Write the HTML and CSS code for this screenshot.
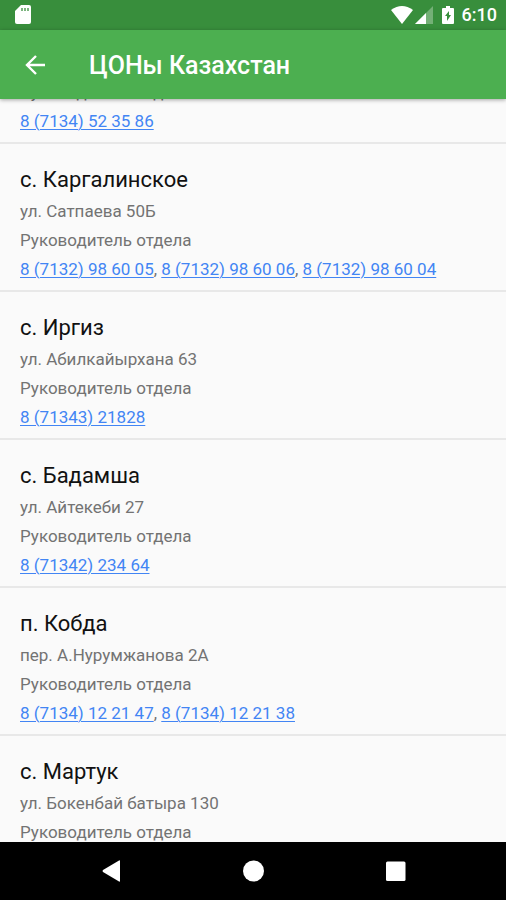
FILE: index.html
```html
<!DOCTYPE html>
<html lang="ru">
<head>
<meta charset="utf-8">
<meta name="viewport" content="width=device-width, initial-scale=1">
<title>ЦОНы Казахстан</title>
<link rel="stylesheet" href="styles.css">
</head>
<body>
<div class="status">
  <svg class="sd-icon" viewBox="0 0 16 20" aria-hidden="true"><path fill="#fff" d="M6 0h8q2 0 2 2v15q0 2-2 2H2q-2 0-2-2V6z"/><path fill="#388e3c" d="M6 3h2v3H6zM9 3h2v3H9zM12 3h2v3h-2z" opacity=".65"/></svg>
  <div class="status-right">
    <svg class="wifi-icon" viewBox="0 0 22 18" aria-hidden="true"><path fill="#fff" d="M0 4Q11-4 22 4L11 18z"/></svg>
    <svg class="signal-icon" viewBox="0 0 18 18" aria-hidden="true"><path fill="#fff" opacity=".3" d="M18 0v18H0z"/><path fill="#fff" d="M11 7v11H0z"/></svg>
    <svg class="battery-icon" viewBox="0 0 12 18" aria-hidden="true"><path fill="#fff" d="M4 0h4v2h3q1 0 1 1v14q0 1-1 1H1q-1 0-1-1V3q0-1 1-1h3z"/><path fill="#388e3c" d="M7 5v4h2l-4 6v-5H3z"/></svg>
    <span class="clock">6:10</span>
  </div>
</div>
<header class="toolbar">
  <button class="back" type="button" aria-label="Назад">
    <svg class="back-icon" viewBox="0 0 20 20" aria-hidden="true"><path fill="none" stroke="#fff" stroke-width="2.4" d="M20 10H2M11 1L2 10l9 9"/></svg>
  </button>
  <h1 class="title">ЦОНы Казахстан</h1>
</header>
<main class="content">
  <ul class="list">
    <li class="item item-scrolled">
      <p class="line">Руководитель отдела</p>
      <p class="line"><a href="tel:87134523586">8 (7134) 52 35 86</a></p>
    </li>
    <li class="item">
      <h2 class="name">с. Каргалинское</h2>
      <p class="line">ул. Сатпаева 50Б</p>
      <p class="line">Руководитель отдела</p>
      <p class="line"><a href="tel:87132986005">8 (7132) 98 60 05</a>, <a href="tel:87132986006">8 (7132) 98 60 06</a>, <a href="tel:87132986004">8 (7132) 98 60 04</a></p>
    </li>
    <li class="item">
      <h2 class="name">с. Иргиз</h2>
      <p class="line">ул. Абилкайырхана 63</p>
      <p class="line">Руководитель отдела</p>
      <p class="line"><a href="tel:87134321828">8 (71343) 21828</a></p>
    </li>
    <li class="item">
      <h2 class="name">с. Бадамша</h2>
      <p class="line">ул. Айтекеби 27</p>
      <p class="line">Руководитель отдела</p>
      <p class="line"><a href="tel:87134223464">8 (71342) 234 64</a></p>
    </li>
    <li class="item">
      <h2 class="name">п. Кобда</h2>
      <p class="line">пер. А.Нурумжанова 2А</p>
      <p class="line">Руководитель отдела</p>
      <p class="line"><a href="tel:87134122147">8 (7134) 12 21 47</a>, <a href="tel:87134122138">8 (7134) 12 21 38</a></p>
    </li>
    <li class="item">
      <h2 class="name">с. Мартук</h2>
      <p class="line">ул. Бокенбай батыра 130</p>
      <p class="line">Руководитель отдела</p>
    </li>
  </ul>
</main>
<nav class="navbar">
  <button class="nav-button" type="button" aria-label="Назад"><svg class="nav-icon" viewBox="0 0 22 22" aria-hidden="true"><path fill="#fff" d="M20 1v20q0 1-1 .5L3 12q-1-1 0-2L19 .5q1-.5 1 .5z"/></svg></button>
  <button class="nav-button" type="button" aria-label="Домой"><svg class="nav-icon" viewBox="0 0 22 22" aria-hidden="true"><circle cx="11.5" cy="11" r="10.5" fill="#fff"/></svg></button>
  <button class="nav-button" type="button" aria-label="Обзор"><svg class="nav-icon" viewBox="0 0 22 22" aria-hidden="true"><rect x="2" y="1.5" width="19.5" height="19.5" rx="1.5" fill="#fff"/></svg></button>
</nav>
</body>
</html>
```
FILE: styles.css
```css
* {
  box-sizing: border-box;
}

body {
  display: flex;
  flex-direction: column;
  height: 100vh;
  margin: 0;
  background: #fafafa;
  color: #737373;
  font-family: Roboto, "Noto Sans", sans-serif;
}

h1, h2, p, ul {
  margin: 0;
  padding: 0;
}

svg {
  display: block;
}

button {
  display: flex;
  align-items: center;
  justify-content: center;
  padding: 0;
  border: 0;
  background: none;
}

.status {
  display: flex;
  flex: none;
  align-items: center;
  justify-content: space-between;
  height: 30px;
  padding: 0 9px 0 15px;
  background: #388e3c;
}

.status-right {
  display: flex;
  align-items: center;
}

.sd-icon {
  width: 16px;
  height: 20px;
}

.wifi-icon {
  width: 22px;
  height: 18px;
}

.signal-icon {
  width: 18px;
  height: 18px;
  margin: 0 9px 0 2px;
}

.battery-icon {
  width: 12px;
  height: 18px;
  margin-right: 8px;
}

.clock {
  color: #fff;
  font-size: 18px;
  font-weight: 500;
  line-height: 32px;
}

.toolbar {
  position: relative;
  z-index: 1;
  display: flex;
  flex: none;
  align-items: center;
  height: 69px;
  padding: 0 10px;
  background: #4caf50;
  box-shadow: 0 1px 4px rgba(0, 0, 0, 0.35);
}

.back {
  width: 50px;
  height: 50px;
}

.back-icon {
  width: 20px;
  height: 20px;
}

.title {
  padding-top: 2px;
  margin-left: 29px;
  color: #fff;
  font-size: 25px;
  font-weight: 500;
  line-height: 32px;
}

.content {
  flex: 1;
  min-height: 0;
  overflow: hidden;
}

.list {
  margin-top: -21px;
  list-style: none;
}

.item {
  padding: 19px 20px 6px;
  border-bottom: 2px solid #e8e8e8;
}

.item-scrolled {
  padding-top: 0;
}

.name {
  color: #111;
  font-size: 22px;
  font-weight: 400;
  line-height: 34px;
}

.line {
  font-size: 17px;
  line-height: 29px;
}

.line a {
  color: #4285f4;
  text-decoration: underline;
  text-decoration-thickness: 1px;
  text-underline-offset: 2px;
}

.navbar {
  display: flex;
  flex: none;
  justify-content: center;
  height: 58px;
  background: #000;
}

.nav-button {
  flex: 0 1 142px;
}

.nav-icon {
  width: 22px;
  height: 22px;
}
```
